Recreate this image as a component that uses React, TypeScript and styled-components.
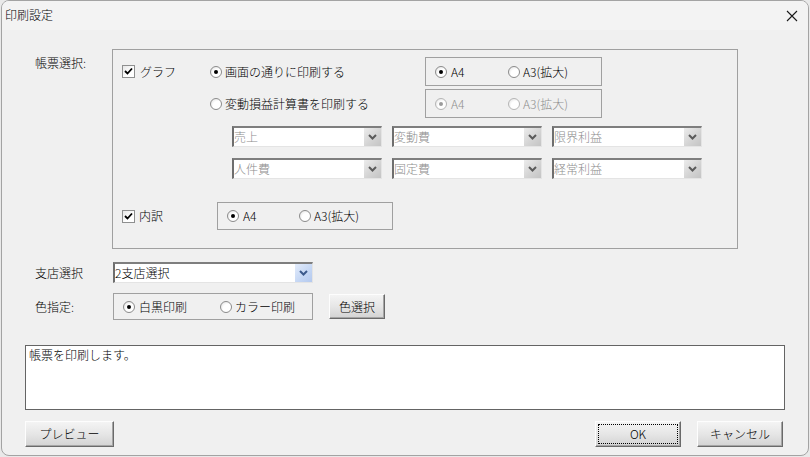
import React from 'react';
import styled, { createGlobalStyle, css } from 'styled-components';

const Global = createGlobalStyle`
  html, body { margin: 0; padding: 0; background: #e9e9e9; }
  body {
    font-family: "Noto Sans CJK JP", "Noto Sans", "Liberation Sans", sans-serif;
    font-size: 12px;
    font-weight: 300;
    color: #000;
  }
`;

const Window = styled.div`
  margin-left: 1px;
  width: 808px;
  height: 456px;
  box-sizing: border-box;
  border: 1px solid #a3a3a3;
  border-radius: 8px;
  overflow: hidden;
  background: #f0f0f0;
  display: flex;
  flex-direction: column;
`;

const TitleBar = styled.div`
  height: 29px;
  flex: none;
  background: #f3f3f3;
  display: flex;
  align-items: center;
  justify-content: space-between;
  padding: 0 10px 0 3px;
`;

const TitleText = styled.span`
  font-size: 12px;
  line-height: 14px;
  margin-top: -1px;
`;

const Body = styled.div`
  flex: 1;
  padding: 19px 22px 0 23px;
  display: flex;
  flex-direction: column;
`;

const FormArea = styled.div`
  margin-left: 10px;
  display: grid;
  grid-template-columns: 77px auto;
  align-items: start;
`;

const FieldLabel = styled.div<{ $top?: number }>`
  line-height: 14px;
  margin-top: ${p => p.$top ?? 0}px;
`;

const GroupBox = styled.div`
  width: 626px;
  box-sizing: border-box;
  border: 1px solid #a0a0a0;
  padding: 7px 0 18px 9px;
  display: flex;
  flex-direction: column;
`;

const OptRow = styled.div<{ $gap?: number; $h?: number }>`
  display: flex;
  align-items: center;
  height: ${p => p.$h ?? 29}px;
  margin-top: ${p => p.$gap ?? 0}px;
`;

const Cell = styled.div<{ $w: number }>`
  width: ${p => p.$w}px;
  flex: none;
  display: flex;
  align-items: center;
`;

const CheckBox = styled.span`
  width: 13px;
  height: 13px;
  box-sizing: border-box;
  border: 1px solid #8e8f8f;
  background: linear-gradient(135deg, #e6e6e6 0%, #ffffff 60%);
  display: inline-flex;
  align-items: center;
  justify-content: center;
  flex: none;
`;

const RadioDot = styled.span<{ $checked?: boolean; $disabled?: boolean }>`
  width: 12px;
  height: 12px;
  border-radius: 50%;
  box-sizing: border-box;
  border: 1px solid ${p => (p.$disabled ? '#b5b5b5' : '#8b8b8b')};
  background: radial-gradient(circle at 65% 65%, #ffffff 45%, #dcdcdc 100%);
  position: relative;
  flex: none;
  ${p =>
    p.$checked &&
    css`
      &::after {
        content: '';
        position: absolute;
        left: 3px;
        top: 3px;
        width: 4px;
        height: 4px;
        border-radius: 50%;
        background: ${p.$disabled ? '#9c9c9c' : '#000'};
      }
    `}
`;

const Label = styled.span<{ $disabled?: boolean; $gap?: number }>`
  margin-left: ${p => p.$gap ?? 3}px;
  line-height: 14px;
  white-space: nowrap;
  color: ${p => (p.$disabled ? '#8f8f8f' : '#000')};
`;

const InnerBox = styled.div<{ $w: number; $h?: number }>`
  width: ${p => p.$w}px;
  height: ${p => p.$h ?? 29}px;
  box-sizing: border-box;
  border: 1px solid #a0a0a0;
  padding-left: 9px;
  display: flex;
  align-items: center;
  flex: none;
`;

const Option = styled.div<{ $w: number }>`
  width: ${p => p.$w}px;
  flex: none;
  display: flex;
  align-items: center;
`;

const ComboGrid = styled.div`
  margin: 8px 0 0 110px;
  display: grid;
  grid-template-columns: repeat(3, 150px);
  column-gap: 10px;
  row-gap: 11px;
`;

const Combo = styled.div<{ $w?: number }>`
  width: ${p => p.$w ?? 150}px;
  height: 21px;
  box-sizing: border-box;
  background: #fff;
  border-top: 2px solid #7e7e7e;
  border-left: 2px solid #6e6e6e;
  border-right: 1px solid #e4e4e4;
  border-bottom: 1px solid #e4e4e4;
  display: flex;
  align-items: stretch;
`;

const ComboText = styled.span<{ $disabled?: boolean }>`
  flex: 1;
  line-height: 17px;
  white-space: nowrap;
  overflow: hidden;
  color: ${p => (p.$disabled ? '#8d8d8d' : '#000')};
`;

const ComboButton = styled.span<{ $blue?: boolean }>`
  width: 17px;
  flex: none;
  display: flex;
  align-items: center;
  justify-content: center;
  background: ${p =>
    p.$blue
      ? 'linear-gradient(135deg, #e3ecfb 0%, #c4d6f4 60%, #b4c9ee 100%)'
      : 'linear-gradient(135deg, #ececec 0%, #d2d2d2 60%, #c4c4c4 100%)'};
`;

const Row = styled.div<{ $top: number }>`
  margin-top: ${p => p.$top}px;
  display: flex;
  align-items: center;
`;

const RowLabel = styled.div`
  width: 78px;
  flex: none;
  line-height: 14px;
`;

const ColorBox = styled(InnerBox)`
  margin-right: 16px;
`;

const Button = styled.button<{ $w: number; $h?: number; $focus?: boolean }>`
  width: ${p => p.$w}px;
  height: ${p => p.$h ?? 26}px;
  box-sizing: border-box;
  padding: 0;
  font: inherit;
  font-size: 12px;
  line-height: 14px;
  color: #000;
  border: 1px solid;
  border-color: #fdfdfd #6a6a6a #6a6a6a #fdfdfd;
  box-shadow: inset -1px -1px 0 #a5a5a5;
  background: linear-gradient(180deg, #f4f4f4 0%, #e6e6e6 50%, #d3d3d3 100%);
  flex: none;
  ${p =>
    p.$focus &&
    css`
      outline: 1px dotted #000;
      outline-offset: -4px;
    `}
`;

const TextArea = styled.div`
  margin-top: 25px;
  width: 760px;
  height: 65px;
  box-sizing: border-box;
  background: #fff;
  border: 1px solid #646464;
  padding: 2px 3px;
  line-height: 14px;
`;

const ButtonBar = styled.div`
  margin-top: 11px;
  display: flex;
  align-items: center;
  width: 758px;
  gap: 16px;
`;

const Spacer = styled.div`
  flex: 1;
`;

const CheckMark = () => (
  <svg width="9" height="9" viewBox="0 0 9 9">
    <path d="M1 4 L3.5 6.5 L8 1.5" stroke="#000" strokeWidth="1.8" fill="none" />
  </svg>
);

const Chevron = ({ color = '#5a5a5a' }: { color?: string }) => (
  <svg width="9" height="6" viewBox="0 0 9 6">
    <path d="M1 1 L4.5 4.5 L8 1" stroke={color} strokeWidth="2" fill="none" />
  </svg>
);

const CloseIcon = () => (
  <svg width="12" height="12" viewBox="0 0 12 12">
    <path d="M1 1 L11 11 M11 1 L1 11" stroke="#1a1a1a" strokeWidth="1.1" fill="none" />
  </svg>
);

const Radio = ({ w, checked, disabled, label, gap }: { w: number; checked?: boolean; disabled?: boolean; label: string; gap?: number }) => (
  <Option $w={w}>
    <RadioDot $checked={checked} $disabled={disabled} />
    <Label $disabled={disabled} $gap={gap}>{label}</Label>
  </Option>
);

const Select = ({ text }: { text: string }) => (
  <Combo>
    <ComboText $disabled>{text}</ComboText>
    <ComboButton>
      <Chevron />
    </ComboButton>
  </Combo>
);

export default function App() {
  return (
    <>
      <Global />
      <Window>
        <TitleBar>
          <TitleText>印刷設定</TitleText>
          <CloseIcon />
        </TitleBar>
        <Body>
          <FormArea>
            <FieldLabel $top={7}>帳票選択:</FieldLabel>
            <GroupBox>
              <OptRow>
                <Cell $w={88}>
                  <CheckBox><CheckMark /></CheckBox>
                  <Label $gap={5}>グラフ</Label>
                </Cell>
                <Cell $w={215}>
                  <RadioDot $checked />
                  <Label>画面の通りに印刷する</Label>
                </Cell>
                <InnerBox $w={177}>
                  <Radio w={73} checked label="A4" gap={4} />
                  <Radio w={80} label="A3(拡大)" gap={3} />
                </InnerBox>
              </OptRow>
              <OptRow $gap={3}>
                <Cell $w={88} />
                <Cell $w={215}>
                  <RadioDot />
                  <Label>変動損益計算書を印刷する</Label>
                </Cell>
                <InnerBox $w={177}>
                  <Radio w={73} checked disabled label="A4" gap={4} />
                  <Radio w={80} disabled label="A3(拡大)" gap={3} />
                </InnerBox>
              </OptRow>
              <ComboGrid>
                <Select text="売上" />
                <Select text="変動費" />
                <Select text="限界利益" />
                <Select text="人件費" />
                <Select text="固定費" />
                <Select text="経常利益" />
              </ComboGrid>
              <OptRow $gap={23} $h={28}>
                <Cell $w={95}>
                  <CheckBox><CheckMark /></CheckBox>
                  <Label $gap={4}>内訳</Label>
                </Cell>
                <InnerBox $w={176} $h={28}>
                  <Radio w={72} checked label="A4" gap={4} />
                  <Radio w={80} label="A3(拡大)" gap={3} />
                </InnerBox>
              </OptRow>
            </GroupBox>
          </FormArea>

          <Row $top={13}>
            <Cell $w={10} />
            <RowLabel>支店選択</RowLabel>
            <Combo $w={200}>
              <ComboText>2支店選択</ComboText>
              <ComboButton $blue>
                <Chevron color="#3c5a8c" />
              </ComboButton>
            </Combo>
          </Row>

          <Row $top={10}>
            <Cell $w={10} />
            <RowLabel>色指定:</RowLabel>
            <ColorBox $w={200} $h={27}>
              <Radio w={97} checked label="白黒印刷" gap={4} />
              <Radio w={90} label="カラー印刷" gap={3} />
            </ColorBox>
            <Button $w={56} $h={25}>色選択</Button>
          </Row>

          <TextArea>帳票を印刷します。</TextArea>

          <ButtonBar>
            <Button $w={89}>プレビュー</Button>
            <Spacer />
            <Button $w={86} $focus>OK</Button>
            <Button $w={86}>キャンセル</Button>
          </ButtonBar>
        </Body>
      </Window>
    </>
  );
}
